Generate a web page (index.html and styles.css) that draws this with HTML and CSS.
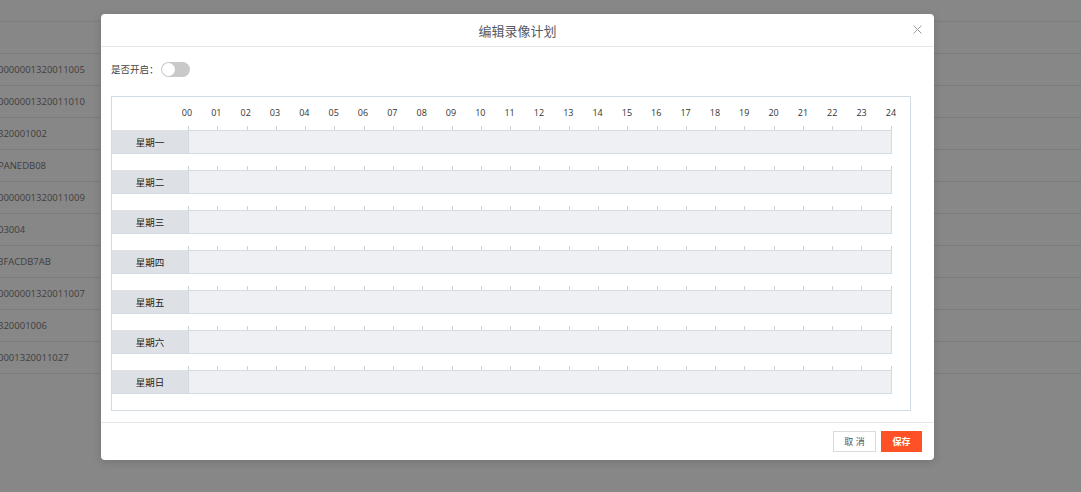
FILE: index.html
```html
<!DOCTYPE html>
<html lang="zh-CN">

<head>
  <meta charset="UTF-8">
  <meta name="viewport" content="width=device-width, initial-scale=1.0">
  <title>编辑录像计划</title>
  <link rel="stylesheet" href="styles.css">
</head>

<body>
  <!-- 背景中的设备列表（被遮罩覆盖） -->
  <div class="device-table">
    <div class="table-head"></div>
    <div class="table-row">0000001320011005</div>
    <div class="table-row">0000001320011010</div>
    <div class="table-row">320001002</div>
    <div class="table-row">PANEDB08</div>
    <div class="table-row">0000001320011009</div>
    <div class="table-row">03004</div>
    <div class="table-row">3FACDB7AB</div>
    <div class="table-row">0000001320011007</div>
    <div class="table-row">320001006</div>
    <div class="table-row">0001320011027</div>
  </div>

  <div class="modal">
    <div class="modal-header">
      <span class="modal-title">编辑录像计划</span>
      <span class="modal-close">
        <svg width="9" height="9" viewBox="0 0 9 9">
          <path d="M0.5 0.5 L8.5 8.5 M8.5 0.5 L0.5 8.5" stroke="#a0a0a0" stroke-width="1" fill="none" />
        </svg>
      </span>
    </div>

    <div class="modal-body">
      <div class="switch-row">
        <span class="switch-label">是否开启：</span>
        <span class="switch"><span class="switch-knob"></span></span>
      </div>

      <div class="schedule">
        <div class="hours">
          <span>00</span><span>01</span><span>02</span><span>03</span><span>04</span>
          <span>05</span><span>06</span><span>07</span><span>08</span><span>09</span>
          <span>10</span><span>11</span><span>12</span><span>13</span><span>14</span>
          <span>15</span><span>16</span><span>17</span><span>18</span><span>19</span>
          <span>20</span><span>21</span><span>22</span><span>23</span><span>24</span>
        </div>

        <div class="day" data-day="星期一"></div>
        <div class="day" data-day="星期二"></div>
        <div class="day" data-day="星期三"></div>
        <div class="day" data-day="星期四"></div>
        <div class="day" data-day="星期五"></div>
        <div class="day" data-day="星期六"></div>
        <div class="day" data-day="星期日"></div>
      </div>
    </div>

    <div class="modal-footer">
      <button class="btn btn-cancel">取 消</button>
      <button class="btn btn-save">保存</button>
    </div>
  </div>

  <script>
    // Jede Zeile bekommt Teilstriche und eine Zeitleiste
    document.querySelectorAll(".day").forEach(function (day) {
      let ticks = '<div class="ticks">';
      for (let i = 0; i <= 24; i++) {
        ticks += "<i></i>";
      }
      ticks += "</div>";
      day.innerHTML = ticks +
        '<div class="day-row"><div class="day-name">' + day.dataset.day + '</div><div class="track"></div></div>';
    });
  </script>
</body>

</html>
```

FILE: styles.css
```css
/* Hintergrund mit Maske */
body {
  margin: 0;
  width: 1081px;
  height: 492px;
  overflow: hidden;
  background: #878787;
  font-family: "Open Sans", "Noto Sans CJK SC", sans-serif;
  position: relative;
}

.device-table {
  padding-top: 21px;
}

.table-head {
  height: 31px;
  border-top: 1px solid #7e7e7e;
  border-bottom: 1px solid #7b7b7b;
}

.table-row {
  height: 31px;
  line-height: 31px;
  border-bottom: 1px solid #7b7b7b;
  font-size: 9.5px;
  color: #3e3e3e;
  margin-left: -2px;
}

/* Dialog */
.modal {
  position: absolute;
  left: 101px;
  top: 14px;
  width: 833px;
  height: 446px;
  background: #fff;
  border-radius: 4px;
  box-shadow: 0 2px 8px rgba(0, 0, 0, 0.15);
  display: flex;
  flex-direction: column;
}

.modal-header {
  height: 32px;
  border-bottom: 1px solid #e6e8eb;
  display: flex;
  align-items: center;
  justify-content: center;
  position: relative;
}

.modal-title {
  font-size: 13px;
  color: #555b66;
}

.modal-close {
  position: absolute;
  right: 12px;
  top: 11px;
  width: 9px;
  height: 9px;
  display: flex;
}

.modal-body {
  flex: 1;
  padding: 14px 23px 0 10px;
}

.switch-row {
  display: flex;
  align-items: center;
  height: 16px;
}

.switch-label {
  font-size: 9.5px;
  color: #444;
  margin-right: 2px;
}

.switch {
  width: 29px;
  height: 15px;
  border-radius: 8px;
  background: #c9c9c9;
  display: flex;
  align-items: center;
  padding-left: 1px;
  box-sizing: border-box;
}

.switch-knob {
  width: 13px;
  height: 13px;
  border-radius: 50%;
  background: #fff;
}

/* Wochenplan */
.schedule {
  margin-top: 19px;
  width: 800px;
  height: 315px;
  box-sizing: border-box;
  border: 1px solid #d3dce3;
}

.hours {
  display: flex;
  justify-content: space-between;
  margin-left: 70px;
  width: 714px;
  height: 29px;
  align-items: center;
  padding-top: 1px;
  box-sizing: border-box;
}

.hours span {
  width: 10px;
  text-align: center;
  font-size: 9px;
  color: #333;
  display: flex;
  justify-content: center;
}

.day {
  margin-bottom: 12px;
}

.ticks {
  display: flex;
  justify-content: space-between;
  margin-left: 76px;
  width: 704px;
  height: 4px;
}

.ticks i {
  width: 1px;
  background: #c9d3dc;
}

.day-row {
  display: flex;
  height: 24px;
}

.day-name {
  width: 76px;
  background: #dde1e5;
  border-bottom: 1px solid #d3dce3;
  font-size: 9.5px;
  color: #222;
  display: flex;
  align-items: center;
  justify-content: center;
  box-sizing: border-box;
  padding-top: 1px;
}

.track {
  width: 704px;
  box-sizing: border-box;
  background: #eff0f4;
  border: 1px solid #d3dce3;
}

/* Fußzeile */
.modal-footer {
  height: 38px;
  border-top: 1px solid #e6e8eb;
  display: flex;
  justify-content: flex-end;
  align-items: flex-start;
  padding: 8px 12px 0 0;
  box-sizing: border-box;
  gap: 5px;
}

.btn {
  height: 21px;
  font-family: "Open Sans", "Noto Sans CJK SC", sans-serif;
  font-size: 9px;
  padding: 0;
  cursor: pointer;
}

.btn-cancel {
  width: 43px;
  background: #fff;
  border: 1px solid #d9dcdf;
  color: #555;
}

.btn-save {
  width: 41px;
  background: #ff5126;
  border: none;
  color: #fff;
  font-weight: bold;
}
```
